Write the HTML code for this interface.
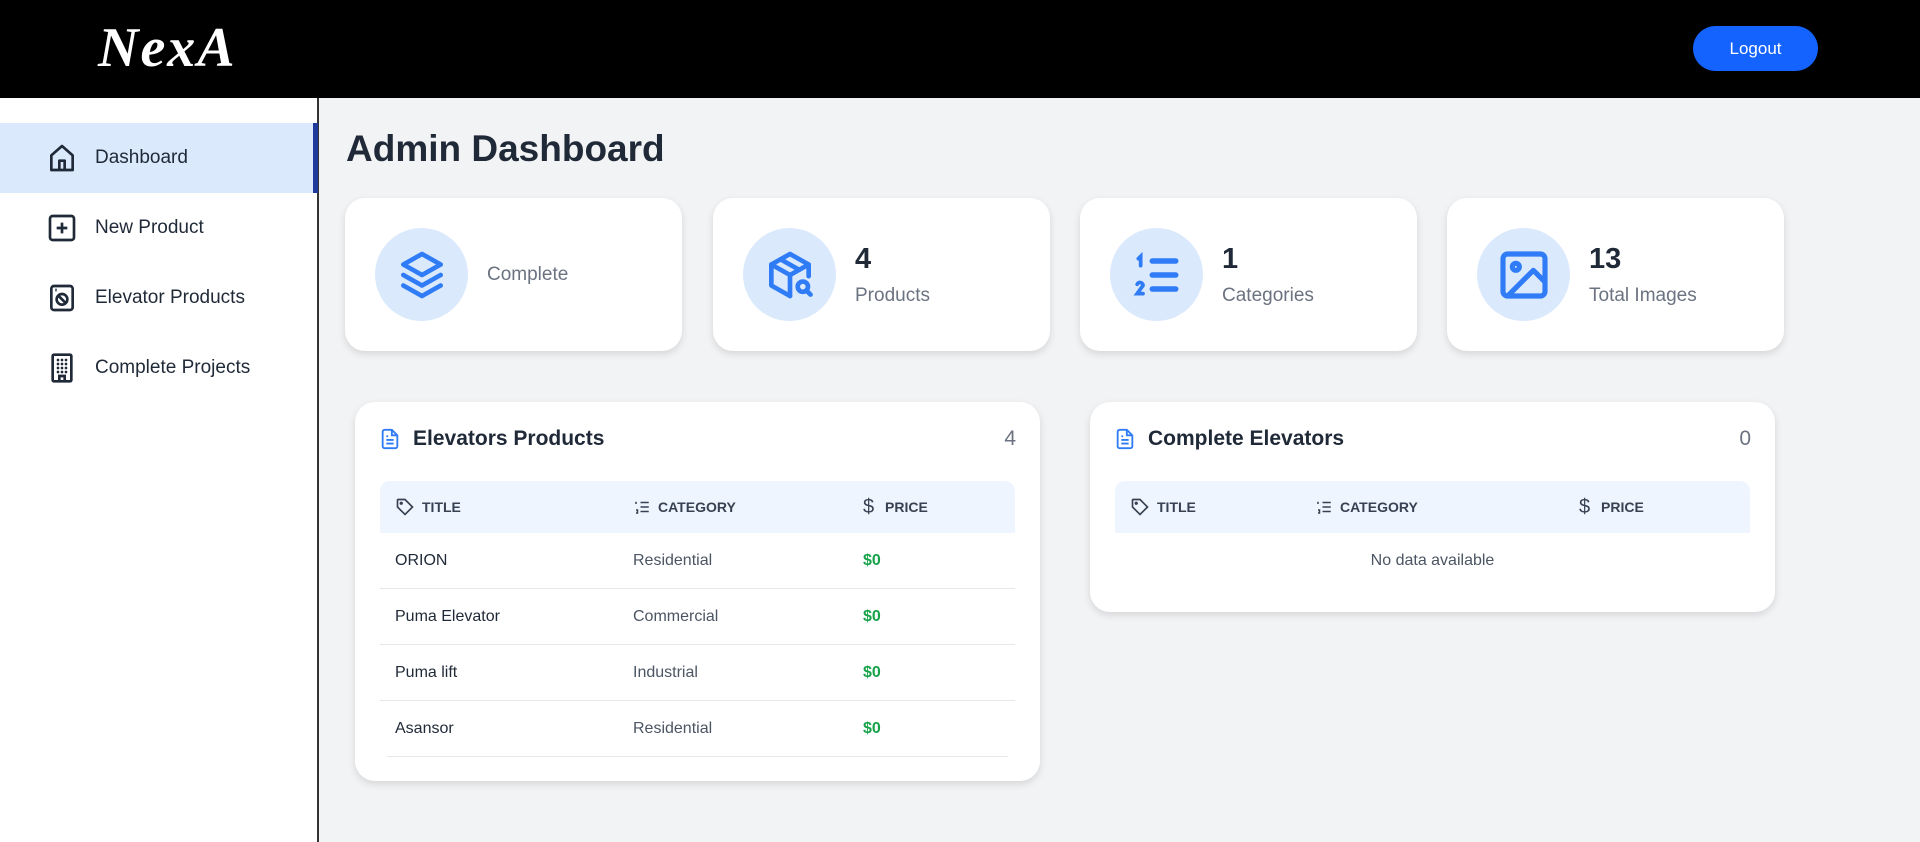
<!DOCTYPE html>
<html><head><meta charset="utf-8"><style>
*{box-sizing:border-box;margin:0;padding:0}
body{width:1920px;height:842px;overflow:hidden;background:#f2f3f5;font-family:"Liberation Sans",sans-serif;color:#1f2937;position:relative}
.hdr{position:absolute;left:0;top:0;width:1920px;height:98px;background:#000}
.logo{position:absolute;left:98px;top:16px;color:#fff;font-family:"Liberation Serif",serif;font-style:italic;font-weight:bold;font-size:56px;letter-spacing:2px}
.logout{position:absolute;left:1693px;top:26px;width:125px;height:45px;border-radius:23px;background:#1463ff;color:#fff;font-size:17px;display:flex;align-items:center;justify-content:center}
.side{position:absolute;left:0;top:98px;width:319px;height:744px;background:#fff;border-right:2px solid #333}
.item{position:absolute;left:0;width:318px;height:70px;display:flex;align-items:center;font-size:19px;color:#1f2937}
.item svg{position:absolute;left:46px}
.item span{position:absolute;left:95px}
.item.act{background:#dbe9fd;border-right:5px solid #1e3a9a}
h1{position:absolute;left:346px;top:128px;font-size:37px;font-weight:bold;color:#1f2937}
.card{position:absolute;background:#fff;border-radius:20px;box-shadow:0 3px 8px rgba(0,0,0,.12)}
.stat{top:198px;width:337px;height:153px}
.circ{position:absolute;left:30px;top:30px;width:93px;height:93px;border-radius:50%;background:#dbe9fd;display:flex;align-items:center;justify-content:center}
.num{position:absolute;left:142px;top:45px;font-size:29px;font-weight:bold}
.lbl{position:absolute;left:142px;top:87px;font-size:19px;color:#6b7280}
.tcard{top:402px;width:685px}
.th{position:absolute;left:24px;right:24px;top:22px;height:30px;font-size:21px;font-weight:bold;display:flex;align-items:center}
.th .c{position:absolute;right:0;font-weight:normal;color:#6b7280}
.thead{position:absolute;left:25px;right:25px;top:79px;height:52px;background:#eef5ff;border-radius:10px 10px 0 0;font-size:14px;font-weight:bold;color:#374151}
.thead div{position:absolute;top:0;height:52px;display:flex;align-items:center;gap:7px}
.row{position:absolute;left:25px;right:25px;height:56px;border-bottom:1px solid #e5e7eb;font-size:16px}
.row div{position:absolute;top:0;height:56px;display:flex;align-items:center}
.g{color:#16a34a;font-weight:bold}
</style></head><body>
<div class="hdr"><div class="logo">NexA</div><div class="logout">Logout</div></div>
<div class="side">
<div class="item act" style="top:25px"><svg width="32" height="32" viewBox="0 0 24 24" fill="none" stroke="#1f2937" stroke-width="2" stroke-linejoin="round"><path d="M4 21V10l8-7 8 7v11z M10 21v-7h4v7"/></svg><span>Dashboard</span></div>
<div class="item" style="top:95px"><svg width="32" height="32" viewBox="0 0 24 24" fill="none" stroke="#1f2937" stroke-width="2"><rect x="3" y="3" width="18" height="18" rx="2"/><path d="M12 8v8M8 12h8"/></svg><span>New Product</span></div>
<div class="item" style="top:165px"><svg width="32" height="32" viewBox="0 0 24 24" fill="none" stroke="#1f2937" stroke-width="2"><rect x="4" y="3" width="16" height="18" rx="2"/><circle cx="12" cy="13" r="4"/><path d="M9.5 10.5l5 5M7 6h1"/></svg><span>Elevator Products</span></div>
<div class="item" style="top:235px"><svg width="32" height="32" viewBox="0 0 24 24" fill="none" stroke="#1f2937" stroke-width="2"><rect x="5" y="2" width="14" height="20" rx="1"/><path d="M10 22v-4h4v4" /><path d="M9 6h0M12 6h0M15 6h0M9 9h0M12 9h0M15 9h0M9 12h0M12 12h0M15 12h0M9 15h0M12 15h0M15 15h0" stroke-linecap="round"/></svg><span>Complete Projects</span></div>
</div>
<h1>Admin Dashboard</h1>

<div class="card stat" style="left:345px"><div class="circ"><svg width="56" height="56" viewBox="0 0 24 24" fill="none" stroke="#2f7cf6" stroke-width="2" stroke-linejoin="round" stroke-linecap="round"><path d="M12 3l8 4.5-8 4.5-8-4.5z"/><path d="M4 12l8 4.5 8-4.5"/><path d="M4 16.5l8 4.5 8-4.5"/></svg></div><div class="lbl" style="top:66px">Complete</div></div>
<div class="card stat" style="left:713px"><div class="circ"><svg width="56" height="56" viewBox="0 0 24 24" fill="none" stroke="#2f7cf6" stroke-width="2" stroke-linejoin="round" stroke-linecap="round"><path d="M12 21l-8-4.5v-9L12 3l8 4.5v5"/><path d="M4 7.5l8 4.5 8-4.5M12 12v9M8 5.3l8 4.5"/><circle cx="17.5" cy="17" r="2.2"/><path d="M19 18.6l1.8 1.8"/></svg></div><div class="num">4</div><div class="lbl">Products</div></div>
<div class="card stat" style="left:1080px"><div class="circ"><svg width="56" height="56" viewBox="0 0 24 24" fill="none" stroke="#2f7cf6" stroke-width="2.4" stroke-linecap="round"><path d="M10 6h10M10 12h10M10 18h10"/><path d="M4 5l1-1v4M3.5 16a1.3 1.3 0 0 1 2.5.5L3.5 20H6" stroke-width="1.6"/></svg></div><div class="num">1</div><div class="lbl">Categories</div></div>
<div class="card stat" style="left:1447px"><div class="circ"><svg width="56" height="56" viewBox="0 0 24 24" fill="none" stroke="#2f7cf6" stroke-width="2.2" stroke-linejoin="round"><rect x="3" y="3" width="18" height="18" rx="2"/><circle cx="8.5" cy="8.5" r="1.5"/><path d="M5 21l11-11 5 5"/></svg></div><div class="num">13</div><div class="lbl">Total Images</div></div>

<div class="card tcard" style="left:355px;height:379px">
<div class="th"><svg width="22" height="26" viewBox="0 0 24 24" fill="none" stroke="#2f7cf6" stroke-width="2"><path d="M14 2H6a2 2 0 0 0-2 2v16a2 2 0 0 0 2 2h12a2 2 0 0 0 2-2V8z M14 2v6h6 M8 13h8M8 17h8M8 9h2"/></svg><span style="margin-left:12px">Elevators Products</span><span class="c">4</span></div>
<div class="thead"><div style="left:15px"><svg width="20" height="20" viewBox="0 0 24 24" fill="none" stroke="#374151" stroke-width="2"><path d="M3 12V4a1 1 0 0 1 1-1h8l9 9-9 9z"/><circle cx="7.5" cy="7.5" r="1"/></svg>TITLE</div><div style="left:253px"><svg width="18" height="18" viewBox="0 0 24 24" fill="none" stroke="#374151" stroke-width="2"><path d="M10 6h11M10 12h11M10 18h11M4 5v3M4 16h2v4H4"/></svg>CATEGORY</div><div style="left:483px"><span style="font-weight:normal;font-size:20px">$</span>&nbsp;PRICE</div></div>
<div class="row" style="top:131px"><div style="left:15px">ORION</div><div style="left:253px;color:#4b5563">Residential</div><div class="g" style="left:483px">$0</div></div>
<div class="row" style="top:187px"><div style="left:15px">Puma Elevator</div><div style="left:253px;color:#4b5563">Commercial</div><div class="g" style="left:483px">$0</div></div>
<div class="row" style="top:243px"><div style="left:15px">Puma lift</div><div style="left:253px;color:#4b5563">Industrial</div><div class="g" style="left:483px">$0</div></div>
<div class="row" style="top:299px;left:32px;right:32px"><div style="left:8px">Asansor</div><div style="left:246px;color:#4b5563">Residential</div><div class="g" style="left:476px">$0</div></div>
</div>

<div class="card tcard" style="left:1090px;height:210px">
<div class="th"><svg width="22" height="26" viewBox="0 0 24 24" fill="none" stroke="#2f7cf6" stroke-width="2"><path d="M14 2H6a2 2 0 0 0-2 2v16a2 2 0 0 0 2 2h12a2 2 0 0 0 2-2V8z M14 2v6h6 M8 13h8M8 17h8M8 9h2"/></svg><span style="margin-left:12px">Complete Elevators</span><span class="c">0</span></div>
<div class="thead"><div style="left:15px"><svg width="20" height="20" viewBox="0 0 24 24" fill="none" stroke="#374151" stroke-width="2"><path d="M3 12V4a1 1 0 0 1 1-1h8l9 9-9 9z"/><circle cx="7.5" cy="7.5" r="1"/></svg>TITLE</div><div style="left:200px"><svg width="18" height="18" viewBox="0 0 24 24" fill="none" stroke="#374151" stroke-width="2"><path d="M10 6h11M10 12h11M10 18h11M4 5v3M4 16h2v4H4"/></svg>CATEGORY</div><div style="left:464px"><span style="font-weight:normal;font-size:20px">$</span>&nbsp;PRICE</div></div>
<div style="position:absolute;left:0;right:0;top:150px;text-align:center;font-size:16px;color:#4b5563">No data available</div>
</div>
</body></html>
